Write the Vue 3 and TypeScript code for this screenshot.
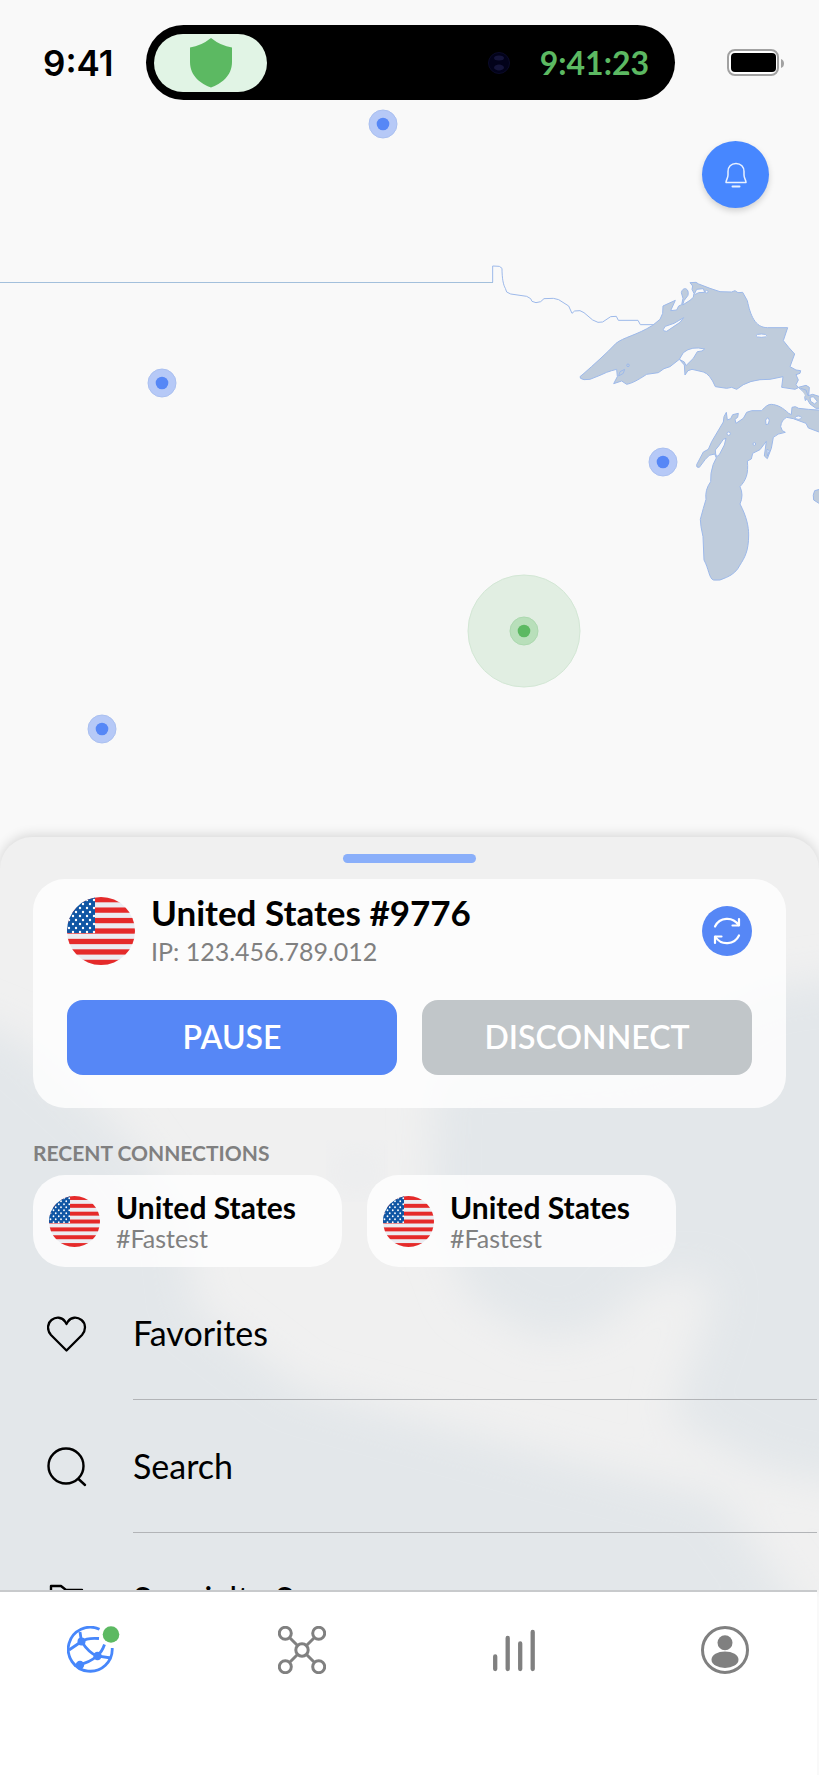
<script setup lang="ts">
interface Pin {
  x: number
  y: number
}

const pins: Pin[] = [
  { x: 383, y: 124 },
  { x: 162, y: 383 },
  { x: 663, y: 462 },
  { x: 102, y: 729 },
]

const recents = [
  { id: 1, country: 'United States', server: '#Fastest' },
  { id: 2, country: 'United States', server: '#Fastest' },
]

// Star grid of the flag canton, alternating rows offset by half a step.
const stars: Pin[] = []
for (let row = 0; row < 9; row++) {
  for (let col = 0; col < 4; col++) {
    stars.push({ x: (row % 2 ? 0 : 4) + col * 7 + 2, y: 3 + row * 4 })
  }
}
</script>

<template>
  <div class="screen">
    <svg class="defs" aria-hidden="true">
      <symbol id="flag-us" viewBox="0 0 68 68">
        <clipPath id="flag-clip"><circle cx="34" cy="34" r="34" /></clipPath>
        <g clip-path="url(#flag-clip)">
          <rect width="68" height="68" fill="#ececf1" />
          <rect v-for="n in 7" :key="n" :y="(n - 1) * 10.46" width="68" height="5.3" fill="#e52a2a" />
          <rect width="28" height="36" fill="#0f56a4" />
          <circle v-for="(s, i) in stars" :key="i" :cx="s.x" :cy="s.y" r="1.2" fill="#fff" />
        </g>
      </symbol>
    </svg>

    <section class="map" aria-label="Server map">
      <svg class="map-canvas" viewBox="0 0 819 837" preserveAspectRatio="xMidYMin slice" aria-hidden="true">
        <path d="M0 282.500H493" fill="none" stroke="#a3c0dc" />
        <g transform="translate(480 250) scale(.33333)" stroke="#9db9ea" stroke-width="3" stroke-linejoin="round">
          <path
            d="M38 97V48L58 49L66 55C66 85 70 105 76 115L80 126L92 132L140 139L152 146L156 154L168 158L182 155L192 146L220 145L236 149L266 168L276 190L284 183L300 182L312 188L338 210L354 217L368 216L392 200L409 199L415 211L474 211L481 224H520"
            fill="none" />
          <path
            d="M300 380L312 370C340 345 380 310 408 280C430 262 470 256 518 226L540 208L548 190L549 168L586 151L572 182L590 180L596 168L605 164L609 145L604 128Q607 115 617 116Q627 120 624 136L612 152L608 165L630 151L640 142L642 130L636 118L638 108L630 98L648 97L656 102L690 115L720 125L755 126L765 122L774 128L788 127L802 152C811 195 825 233 862 233L923 233L910 272L926 292L944 312L930 350L948 360L962 362L960 370L948 374L955 390L948 404L955 413L945 418L905 412L909 380L870 388Q806 386 770 418L755 412L740 415L706 410Q690 372 670 366L636 358L624 362L615 375L613 345L598 328L570 350L552 356L535 368L500 373Q460 400 440 403L425 393L401 401L412 380L410 358L395 362L380 367L360 376L330 388L312 389Q298 386 300 380Z"
            fill="#bfccdc" />
          <g fill="#f9f9f9">
            <path d="M550 238L556 229L582 220L611 203L600 217L560 244Q549 245 550 238Z" />
            <path d="M598 328L610 308Q635 287 674 297L666 303L652 305L640 325L618 347L613 336Z" />
            <path d="M644 130L650 118L670 116L674 127L656 128L646 133Z" />
            <circle cx="680" cy="125" r="4" />
            <ellipse cx="844" cy="257" rx="16" ry="5" />
            <path d="M416 378L420 365L434 358L430 370Z" fill="none" />
            <circle cx="444" cy="346" r="4" fill="none" />
            <path d="M955 412L978 406L988 412L986 440L976 452L974 442L978 432Z" fill="#bfccdc" />
            <path d="M962 415L978 420L984 437L998 433L1020 440V475H1008L990 462L982 448" fill="#bfccdc" />
            <path d="M990 442L1000 440L1012 454L1004 462L992 454Z" />
          </g>
        </g>
        <g transform="translate(560 380) scale(.33333)" stroke="#9db9ea" stroke-width="3" stroke-linejoin="round">
          <path
            d="M410 254L430 216L445 208L455 185L490 126L492 110L499 97L502 120L512 116L518 104L535 100L533 112L525 118L528 130L550 115L560 97L575 92L605 92Q622 72 634 73C652 74 670 84 686 100L694 104L696 82L706 80L716 85L745 88L800 92V170L777 156L745 144L738 130L700 116L680 112Q664 120 662 140L667 152L676 157Q652 160 640 172L634 205L622 236L613 228L619 184L600 209L578 220L574 237L562 243C566 282 558 300 540 320Q552 345 540 372C560 410 566 440 566 465C566 515 553 534 540 555Q528 580 500 592Q480 604 460 600C447 595 446 565 432 540L429 470L423 440L421 418L430 385L438 358Q434 330 452 305L453 280Q458 250 469 234L464 222L448 226L436 238L418 262Q408 264 410 254Z"
            fill="#bfccdc" />
          <path d="M761 360Q757 345 764 332Q776 325 800 330V370H777Z" fill="#bfccdc" />
          <g fill="#f9f9f9">
            <path d="M467 222L466 210L476 198L490 178L498 175L493 195L478 224L470 230Z" />
            <path d="M618 134L617 120L623 113L628 120L625 132Z" />
            <circle cx="506" cy="161" r="5" />
            <circle cx="583" cy="192" r="4" />
            <ellipse cx="715" cy="113" rx="9" ry="5" />
            <path d="M622 228L621 208L628 212Z" />
          </g>
        </g>
        <g v-for="p in pins" :key="`${p.x}-${p.y}`">
          <circle :cx="p.x" :cy="p.y" r="14" fill="#b6c9f7" stroke="#aac0f0" />
          <circle :cx="p.x" :cy="p.y" r="6.300" fill="#5687f6" />
        </g>
        <circle cx="524" cy="631" r="56" fill="#e1eee2" stroke="#d3e7d5" />
        <circle cx="524" cy="631" r="14" fill="#b8dfba" stroke="#acd8af" />
        <circle cx="524" cy="631" r="6.300" fill="#5cb962" />
      </svg>

      <header class="status">
        <span class="clock">9:41</span>
        <div class="island">
          <span class="shield">
            <svg width="42" height="50" viewBox="0 0 42 50" aria-hidden="true">
              <path d="M21 0Q31 8 42 9.500V24C42 38 31 46 21 49.500C11 46 0 38 0 24V9.500Q11 8 21 0Z" fill="#5cb962" />
            </svg>
          </span>
          <svg class="camera" width="24" height="24" viewBox="0 0 24 24" aria-hidden="true">
            <circle cx="12" cy="12" r="10.500" fill="#02021a" stroke="#0b0b28" />
            <ellipse cx="12" cy="7" rx="5" ry="2.500" fill="#15153a" />
            <ellipse cx="12" cy="16.500" rx="5" ry="3" fill="#15153a" />
          </svg>
          <span class="timer">9:41:23</span>
        </div>
        <svg class="battery" width="58" height="28" viewBox="0 0 58 28" role="img" aria-label="Battery full">
          <rect x="1" y="1" width="50" height="25" rx="7" fill="#fff" stroke="#a2a2a2" stroke-width="2" />
          <rect x="4" y="4" width="45" height="19" rx="4" fill="#000" />
          <path d="M54 10Q57 11 57 14.500Q57 18 54 19Z" fill="#a2a2a2" />
        </svg>
      </header>

      <button class="bell" type="button" aria-label="Notifications">
        <svg width="22" height="26" viewBox="0 0 22 26" fill="none" stroke="#e9f1ff" stroke-width="1.500" stroke-linecap="round" stroke-linejoin="round" aria-hidden="true">
          <path d="M11 1.500C6 1.500 3 5 3 9.500V13C3 16 1 18 1 20.500H21C21 18 19 16 19 13V9.500C19 5 16 1.500 11 1.500Z" />
          <path d="M7.500 24.500H14.500" stroke-width="2" />
        </svg>
      </button>
    </section>

    <main class="sheet">
      <svg class="haze" viewBox="0 837 819 755" preserveAspectRatio="none" aria-hidden="true">
        <defs>
          <filter id="soft" x="-20%" y="-20%" width="140%" height="140%"><feGaussianBlur stdDeviation="20" /></filter>
        </defs>
        <g fill="#e3e7ea" filter="url(#soft)">
          <path d="M-80 1000L20 1040L120 1130L185 1220L195 1310L300 1390L430 1425L560 1460L720 1500L820 1640H-80Z" />
          <path d="M900 970L760 990L640 1060L435 1070L432 1200L470 1300L540 1340L600 1330L640 1290L690 1275L715 1290L700 1340L670 1420L760 1470L900 1500Z" />
        </g>
        <circle cx="357" cy="1172" r="22" fill="#e9ebee" filter="url(#soft)" />
      </svg>

      <div class="handle"></div>

      <section class="card" aria-label="Current connection">
        <div class="server">
          <svg class="flag-lg" role="img" aria-label="United States flag"><use href="#flag-us" /></svg>
          <div class="names">
            <h1>United States #9776</h1>
            <p>IP: 123.456.789.012</p>
          </div>
          <button class="refresh" type="button" aria-label="Change server">
            <svg width="28" height="28" viewBox="0 0 28 28" fill="none" stroke="#fff" stroke-width="2.200" stroke-linecap="round" stroke-linejoin="round" aria-hidden="true">
              <path d="M2 9.500A13.500 13.500 0 0 1 25.500 8" />
              <path d="M26 2V8.500H19.500" />
              <path d="M26 18.500A13.500 13.500 0 0 1 2.500 20" />
              <path d="M2 26V19.500H8.500" />
            </svg>
          </button>
        </div>
        <div class="actions">
          <button class="action pause" type="button">PAUSE</button>
          <button class="action disconnect" type="button">DISCONNECT</button>
        </div>
      </section>

      <h2>RECENT CONNECTIONS</h2>
      <div class="recents">
        <button v-for="r in recents" :key="r.id" class="recent" type="button">
          <svg class="flag-sm" role="img" aria-label="United States flag"><use href="#flag-us" /></svg>
          <span class="recent-text">
            <strong>{{ r.country }}</strong>
            <span>{{ r.server }}</span>
          </span>
        </button>
      </div>

      <ul class="list">
        <li>
          <a href="#favorites">
            <svg width="40" height="40" viewBox="0 0 40 40" fill="none" stroke="#000" stroke-width="2.300" stroke-linejoin="round" aria-hidden="true">
              <path d="M19.500 36.500L4 21C-0.500 16 0.500 9 4.500 6C9 2.500 15 3 18 7.500L19.500 10L21 7.500C24 3 30 2.500 34.500 6C38.500 9 39.500 16 35 21Z" />
            </svg>
            <span>Favorites</span>
          </a>
        </li>
        <li>
          <a href="#search">
            <svg width="40" height="40" viewBox="0 0 40 40" fill="none" stroke="#000" stroke-width="2.400" stroke-linecap="round" aria-hidden="true">
              <circle cx="19" cy="19" r="17.500" />
              <path d="M31.500 32L38 38" />
            </svg>
            <span>Search</span>
          </a>
        </li>
        <li class="peek">
          <a href="#specialty">
            <svg width="40" height="40" viewBox="0 0 40 40" fill="none" stroke="#000" stroke-width="2.400" stroke-linejoin="round" aria-hidden="true">
              <path d="M4 34V6H14L19 10H35V34Z" />
            </svg>
            <span>Specialty Servers</span>
          </a>
        </li>
      </ul>
    </main>

    <nav class="tabs" aria-label="Main">
      <a href="#connect" aria-label="Connect">
        <svg width="56" height="50" viewBox="0 0 56 50" aria-hidden="true">
          <g fill="none" stroke="#4787fb" stroke-width="2.800">
            <path d="M32.500 3.300A22 22 0 1 0 45.200 22" />
            <path d="M2 24L14.500 15.500Q20 11.500 32 12.500" />
            <path d="M13 6L14.500 15.500Q22 27 30 30L44 32" />
            <path d="M30 30Q35 26 37.500 18.500" />
            <path d="M30 30Q22 37 12 38.500L7 39.500" />
          </g>
          <g fill="#4787fb">
            <circle cx="14.500" cy="15.500" r="4" />
            <circle cx="30.500" cy="30" r="4.200" />
            <circle cx="13" cy="39" r="4.200" />
          </g>
          <circle cx="44" cy="8.500" r="8.300" fill="#5cb962" />
        </svg>
      </a>
      <a href="#meshnet" aria-label="Meshnet">
        <svg width="48" height="48" viewBox="0 0 48 48" fill="none" stroke="#808080" stroke-width="3" aria-hidden="true">
          <circle cx="24" cy="24" r="6.200" />
          <circle cx="7.300" cy="7.300" r="6" />
          <circle cx="40.700" cy="7.300" r="6" />
          <circle cx="7.300" cy="40.700" r="6" />
          <circle cx="40.700" cy="40.700" r="6" />
          <path d="M12 12L19.500 19.500M36 12L28.500 19.500M12 36L19.500 28.500M36 36L28.500 28.500" />
        </svg>
      </a>
      <a href="#statistics" aria-label="Statistics">
        <svg width="48" height="48" viewBox="0 0 48 48" stroke="#808080" stroke-width="4.300" stroke-linecap="round" aria-hidden="true">
          <path d="M5.200 30.500V43M17.700 12V43M30.200 17.500V43M42.700 6V43" />
        </svg>
      </a>
      <a href="#profile" aria-label="Profile">
        <svg width="48" height="48" viewBox="0 0 48 48" fill="#808080" aria-hidden="true">
          <circle cx="24" cy="24" r="22.500" fill="none" stroke="#808080" stroke-width="3" />
          <circle cx="24" cy="16.700" r="7.500" />
          <ellipse cx="24" cy="33.700" rx="13.500" ry="8.300" />
        </svg>
      </a>
    </nav>
  </div>
</template>

<style>
body {
  background: #f9f9f9;
}
</style>

<style scoped>
.screen {
  display: flex;
  flex-direction: column;
  min-height: 100vh;
  font-family: Lato, "Liberation Sans", sans-serif;
  color: #000;
}

.defs {
  position: absolute;
  width: 0;
  height: 0;
}

button {
  border: 0;
  padding: 0;
  font: inherit;
  color: inherit;
  cursor: pointer;
}

a {
  color: inherit;
  text-decoration: none;
}

h1,
h2,
p {
  margin: 0;
}

.map {
  position: relative;
  flex: 1;
  display: flex;
  flex-direction: column;
  min-height: 420px;
}

.map-canvas {
  position: absolute;
  inset: 0;
  width: 100%;
  height: 100%;
}

.status {
  position: relative;
  display: grid;
  grid-template-columns: 103px minmax(0, 529px) 1fr;
  align-items: center;
  padding: 25px 34px 0 43px;
}

.clock {
  font: 600 35px/40px Inter, "Liberation Sans", sans-serif;
}

.island {
  display: flex;
  align-items: center;
  box-sizing: border-box;
  height: 75px;
  padding: 0 26px 0 8px;
  border-radius: 38px;
  background: #000;
}

.shield {
  display: flex;
  align-items: center;
  justify-content: center;
  width: 113px;
  height: 58px;
  margin-right: auto;
  border-radius: 29px;
  background: #e1f4e5;
}

.camera {
  margin-right: 29px;
}

.timer {
  font-size: 32px;
  font-weight: 700;
  line-height: 40px;
  color: #5cb962;
}

.battery {
  justify-self: end;
}

.bell {
  position: relative;
  display: flex;
  align-items: center;
  justify-content: center;
  align-self: flex-end;
  width: 67px;
  height: 67px;
  margin: 41px 50px 0 0;
  border-radius: 50%;
  background: #4787ff;
  box-shadow: 0 3px 6px rgba(0, 0, 0, 0.16);
}

.sheet {
  position: relative;
  padding: 17px 0 0 33px;
  border-radius: 32px 32px 0 0;
  background: #f0f0f0;
  box-shadow: 0 -2px 12px rgba(0, 0, 0, 0.14);
}

.haze {
  position: absolute;
  inset: 0;
  width: 100%;
  height: 100%;
  border-radius: 32px 32px 0 0;
}

.sheet > *:not(.haze) {
  position: relative;
}

.handle {
  width: 133px;
  height: 9px;
  margin: 0 calc(50% - 50px) 16px auto;
  border-radius: 5px;
  background: #8aaffa;
}

.card {
  margin-right: 33px;
  padding: 13px 34px 33px;
  border-radius: 32px;
  background: rgba(255, 255, 255, 0.8);
}

.server {
  display: flex;
  align-items: center;
  gap: 16px;
}

.flag-lg {
  width: 68px;
  height: 68px;
}

.names {
  flex: 1;
}

h1 {
  font-size: 35px;
  font-weight: 700;
  line-height: 40px;
}

p {
  font-size: 25px;
  line-height: 38px;
  color: #808080;
}

.refresh {
  display: flex;
  align-items: center;
  justify-content: center;
  width: 50px;
  height: 50px;
  border-radius: 50%;
  background: #5687f6;
}

.actions {
  display: grid;
  grid-template-columns: 1fr 1fr;
  gap: 25px;
  margin-top: 30px;
}

.action {
  height: 75px;
  padding-bottom: 2px;
  border-radius: 16px;
  font-size: 32px;
  font-weight: 600;
  color: #fff;
}

.pause {
  background: #5687f6;
}

.disconnect {
  background: #c1c6c9;
}

h2 {
  margin: 31px 0 8px;
  font-size: 21px;
  font-weight: 700;
  line-height: 28px;
  color: #808080;
}

.recents {
  display: flex;
  gap: 25px;
}

.recent {
  display: flex;
  align-items: center;
  gap: 16px;
  box-sizing: border-box;
  width: 309px;
  height: 92px;
  padding: 0 16px;
  border-radius: 32px;
  background: rgba(255, 255, 255, 0.8);
  text-align: left;
}

.flag-sm {
  width: 51px;
  height: 51px;
}

.recent-text {
  display: flex;
  flex-direction: column;
  font-size: 25px;
  line-height: 28px;
  color: #808080;
}

.recent-text strong {
  font-size: 30px;
  line-height: 34px;
  color: #000;
}

.list {
  margin: 0;
  padding: 0;
  list-style: none;
}

.list li {
  display: flex;
  margin-right: 2px;
}

.list a {
  display: flex;
  flex: 1;
  align-items: center;
  height: 133px;
  padding-left: 14px;
  font-size: 34px;
  line-height: 40px;
}

.list span {
  flex: 1;
  margin-left: 46px;
  padding: 46px 0;
  border-bottom: 1px solid #b2b4b7;
}

.list .peek {
  height: 57px;
  overflow: hidden;
}

.tabs {
  position: relative;
  display: flex;
  justify-content: space-between;
  box-sizing: border-box;
  min-height: 185px;
  margin-right: 2px;
  padding: 34px 68px 0 67px;
  border-top: 2px solid #c8cacc;
  background: #fff;
}

.tabs a {
  width: 48px;
  height: 48px;
}
</style>
